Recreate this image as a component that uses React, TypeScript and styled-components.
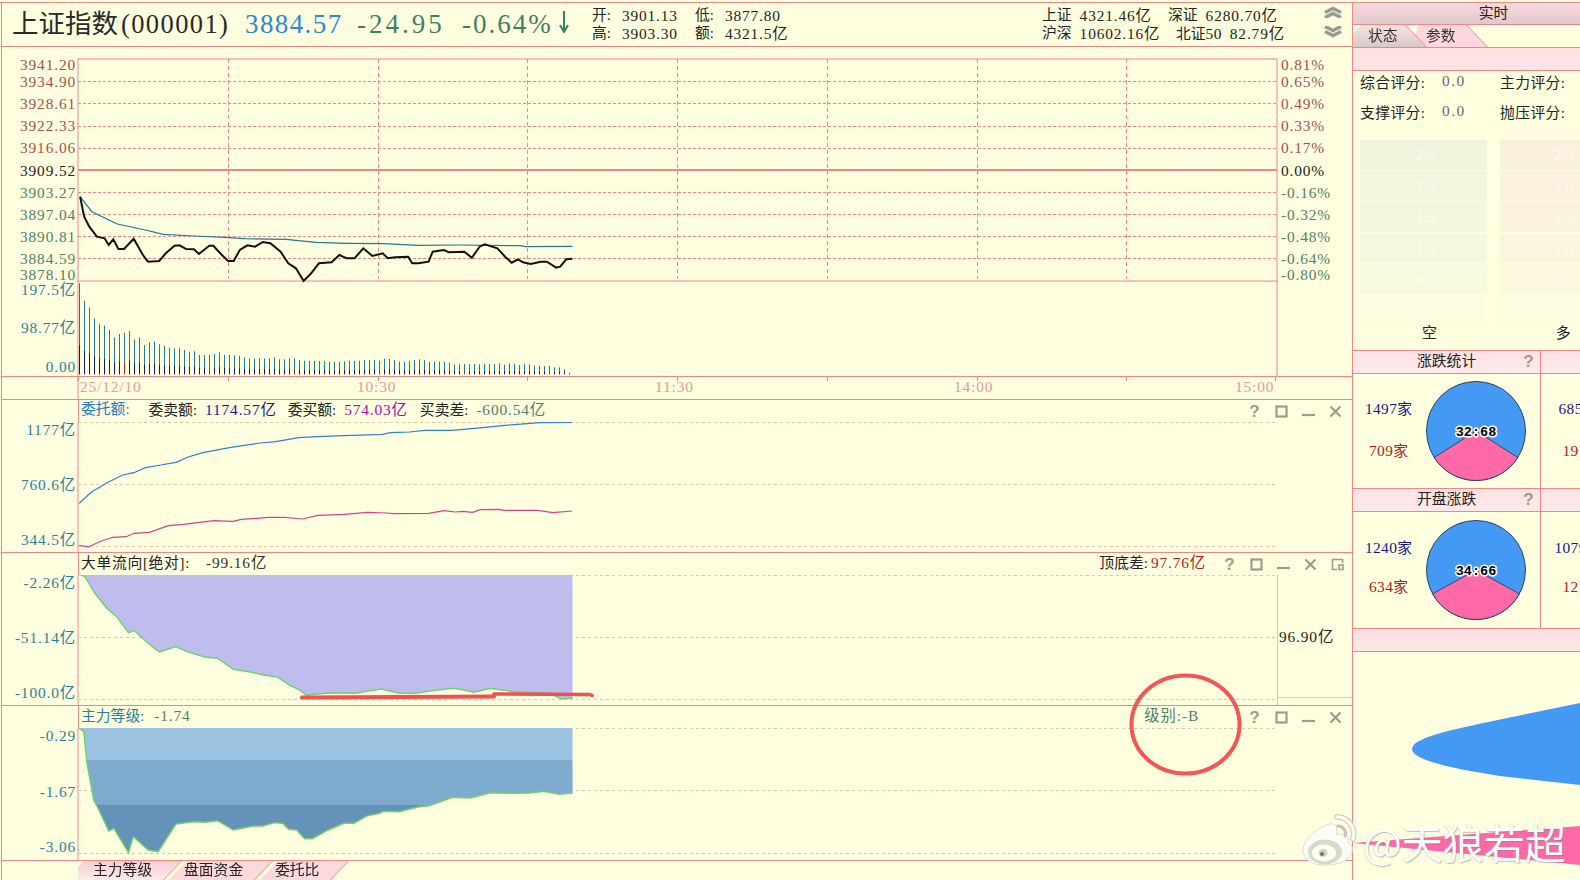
import React from 'react';
import styled, { createGlobalStyle } from 'styled-components';

const PINK = '#e88a8c';
const BG = '#ffffe0';
const TEAL = '#2b7f9c';
const BROWN = '#a34f4f';
const GREEN = '#4f8068';
const FONT = '"Liberation Serif","Noto Sans CJK SC",serif';

const Global = createGlobalStyle`
  html, body { margin: 0; padding: 0; background: ${BG}; }
  body { width: 1580px; height: 880px; overflow: hidden; font-family: ${FONT}; font-size: 14.8px; color: #222; }
  * { box-sizing: border-box; }
`;

const Screen = styled.div`
  position: relative; width: 1580px; height: 880px; overflow: hidden; background: ${BG};
  padding: 3px 0 0 1px; display: flex;
  &::before { content: ''; position: absolute; left: 0; right: 0; top: 2px; height: 1px; background: ${PINK}; }
`;
const LeftCol = styled.div`
  width: 1351px; flex: none; display: flex; flex-direction: column;
  border-left: 1px solid ${PINK};
`;
const RightCol = styled.div`
  width: 228px; flex: none; display: flex; flex-direction: column; border-left: 1px solid ${PINK}; overflow: hidden;
`;
const Num = styled.span<{ $tight?: boolean }>`
  font-size: 15.4px; letter-spacing: ${p => (p.$tight ? '.4px' : '.85px')};
`;

/* header */
const Header = styled.header`
  height: 44px; flex: none; display: flex; align-items: center; padding-left: 10px; border-bottom: 1px solid ${PINK};
`;
const Big = styled.div<{ $w: number; $c: string; $ls?: number }>`
  width: ${p => p.$w}px; flex: none; font-size: 27px; letter-spacing: ${p => p.$ls ?? 1.4}px; color: ${p => p.$c}; white-space: nowrap; line-height: 1;
`;
const Title = styled(Big)`
  letter-spacing: 0; font-size: 26.5px;
`;
const TitleCode = styled.span`
  margin-left: 3px; letter-spacing: 1.4px;
`;
const InfoGrid = styled.div<{ $w: number; $col: number }>`
  width: ${p => p.$w}px; flex: none; display: grid; grid-template-columns: ${p => p.$col}px 1fr; row-gap: 1px; line-height: 17px; white-space: nowrap;
  color: #222;
`;
const KV = styled.span<{ $g: number; $shift?: number }>`
  display: inline-flex; gap: ${p => p.$g}px; margin-left: ${p => p.$shift ?? 0}px;
`;
const Chevrons = styled.div`
  margin-left: 41px; margin-bottom: 5px; display: flex; flex-direction: column; gap: 8px; align-items: center;
`;

/* panes */
const MainPane = styled.section`
  height: 330px; flex: none; border-bottom: 1px solid ${PINK};
`;
const TimePane = styled.section`
  height: 23px; flex: none; border-bottom: 1px solid ${PINK};
`;
const Pane = styled.section<{ $h: number }>`
  height: ${p => p.$h}px; flex: none; display: flex; flex-direction: column; border-bottom: 1px solid ${PINK};
`;
const Legend = styled.div`
  height: 22px; flex: none; margin-left: 76px; padding: 0 0 3px 2px; border-left: 1px solid ${PINK};
  display: flex; align-items: center; white-space: nowrap; line-height: 1;
`;
const LegendItem = styled.span<{ $m?: number; $auto?: boolean; $ls?: number }>`
  margin-left: ${p => (p.$auto ? 'auto' : `${p.$m ?? 0}px`)};
  letter-spacing: ${p => p.$ls ?? 0}px;
`;
const LegendName = styled.span<{ $c: string; $ls?: number }>`
  color: ${p => p.$c};
  letter-spacing: ${p => p.$ls ?? 0}px;
`;
const Val = styled(Num)<{ $c: string; $g?: number }>`
  color: ${p => p.$c}; margin-left: ${p => p.$g ?? 8}px;
`;
const Tools = styled.div<{ $m?: number; $pr?: number }>`
  display: flex; align-items: center; gap: 14px; margin-left: ${p => (p.$m === undefined ? 'auto' : `${p.$m}px`)}; padding-right: ${p => p.$pr ?? 10}px; padding-top: 3px;
`;
const Tool = styled.svg`
  width: 13px; height: 13px; display: block; flex: none; fill: none; stroke: #9c9c8e; stroke-width: 2.2;
`;
const Help = styled.span`
  width: 13px; height: 13px; display: block; flex: none; font: bold 17px/13px "Liberation Sans", sans-serif; color: #9c9c8e; text-align: center;
`;
const ChartSvg = styled.svg`
  display: block; flex: none;
`;
const Axis = styled.text<{ $c: string; $end?: boolean }>`
  font-family: ${FONT}; font-size: 15.4px; letter-spacing: .85px; fill: ${p => p.$c}; text-anchor: ${p => (p.$end ? 'end' : 'start')};
`;

/* bottom tabs */
const BottomTabs = styled.nav`
  height: 19px; flex: none; margin-left: 76px; display: flex;
`;
const BottomTab = styled.div<{ $w: number; $first?: boolean }>`
  position: relative; width: ${p => p.$w}px; flex: none; margin-right: -12px; padding-left: 15px;
  line-height: 19px; filter: drop-shadow(1px 0 0 ${PINK}); white-space: nowrap; z-index: ${p => (p.$first ? 3 : 1)};
  &::before {
    content: ''; position: absolute; inset: 0; z-index: -1;
    background: ${p => (p.$first ? 'linear-gradient(#f5cfd2,#fdeaea)' : '#fcd9da')};
    clip-path: polygon(${p => (p.$first ? '6px 0' : '18px 0')}, 100% 0, calc(100% - 18px) 100%, 0 100%, ${p => (p.$first ? '0 6px' : '0 100%')});
  }
`;

/* right column */
const TopBar = styled.div`
  height: 22px; flex: none; padding-left: 54px; text-align: center; line-height: 20px; border-bottom: 1px solid ${PINK};
  background: linear-gradient(#f9d9dc, #dfc9cb);
`;
const SideTabs = styled.div`
  height: 22px; flex: none; display: flex;
`;
const SideTab = styled.div<{ $w: number; $first?: boolean }>`
  position: relative; width: ${p => p.$w}px; flex: none; margin-right: -13px; padding-left: ${p => (p.$first ? 15 : 13)}px; line-height: 23px;
  filter: drop-shadow(1px 0 0 ${PINK}); z-index: ${p => (p.$first ? 2 : 1)}; color: #333;
  &::before {
    content: ''; position: absolute; inset: 0; z-index: -1;
    background: ${p => (p.$first ? 'linear-gradient(#f8e2e2,#d8c8c8)' : '#fcd8dc')};
    clip-path: polygon(${p => (p.$first ? '0 8px, 8px 0' : '0 100%, 5px 0')}, calc(100% - 21px) 0, 100% 100%, 0 100%);
  }
`;
const Band = styled.div<{ $h: number }>`
  height: ${p => p.$h}px; flex: none; border-top: 1px solid ${PINK}; border-bottom: 1px solid ${PINK};
  background: linear-gradient(#fedfe2, #fde6e6);
`;
const Scores = styled.div`
  display: grid; grid-template-columns: 82px 58px auto; grid-auto-rows: 24px; row-gap: 6px; align-items: center;
  padding: 0 0 0 7px; margin-top: -2px; height: 71px; flex: none; white-space: nowrap;
`;
const ScoreLabel = styled.span`
  letter-spacing: .4px;
`;
const ScoreVal = styled.span`
  color: #667; letter-spacing: 1.5px; font-size: 15.4px;
`;
const Ladder = styled.div`
  display: grid; grid-template-columns: 127px 127px; column-gap: 13px; padding-left: 7px; width: 300px; flex: none;
  grid-auto-rows: 29.7px; row-gap: 1.5px; height: 182px;
`;
const Rung = styled.div<{ $bg: string }>`
  background: ${p => p.$bg}; color: rgba(255, 255, 255, .75); text-align: center; line-height: 29px; font-size: 15.4px;
`;
const Sides = styled.div`
  height: 28px; flex: none; display: flex; white-space: nowrap; line-height: 22px; padding-left: 69px; gap: 119px;
`;
const SectionHead = styled.div`
  height: 24px; flex: none; display: flex; border-top: 1px solid ${PINK}; border-bottom: 1px solid ${PINK};
  background: linear-gradient(#fde2e4, #fdeaea);
`;
const HeadCell = styled.div`
  width: 188px; flex: none; border-right: 1px solid ${PINK}; display: flex; align-items: center; line-height: 18px; padding: 0 0 2px 64px;
`;
const HeadHelp = styled(Help)`
  margin-left: auto; margin-right: 5px;
`;
const StatRow = styled.div<{ $h: number }>`
  height: ${p => p.$h}px; flex: none; display: flex;
`;
const StatCell = styled.div`
  width: 188px; flex: none; border-right: 1px solid ${PINK}; display: flex; align-items: center;
`;
const Counts = styled.div<{ $gap: number; $up: number }>`
  width: 71px; flex: none; display: flex; flex-direction: column; align-items: center; justify-content: center; gap: ${p => p.$gap}px;
  line-height: 17px; white-space: nowrap; margin-bottom: ${p => p.$up}px;
`;
const CountsSide = styled(Counts)`
  width: 74px;
`;
const Up = styled.span`
  color: #16168c;
`;
const Down = styled.span`
  color: #a82020;
`;
const PieText = styled.text`
  font: bold 13.5px "Liberation Mono", monospace; text-anchor: middle; fill: #000; stroke: #fff; stroke-width: 3px; paint-order: stroke; stroke-linejoin: round;
`;
const BigPie = styled.svg`
  display: block; flex: none;
`;

/* overlays */
const Circle = styled.svg`
  position: absolute; left: 1129px; top: 673px; width: 113px; height: 103px; fill: none; stroke: #f25656; stroke-width: 4;
`;
const Watermark = styled.div`
  position: absolute; left: 1301px; top: 812px; height: 58px; display: flex; align-items: center; gap: 6px;
  font: 400 41px/58px "Noto Sans CJK SC", "Noto Sans", sans-serif; color: #fdfdfa;
  text-shadow: 1px 1px 1px rgba(130, 130, 120, .5), -1px 0 1px rgba(170, 170, 160, .3);
  white-space: nowrap;
`;
const WeiboLogo = styled.svg`
  width: 56px; height: 56px; flex: none; display: block;
`;

/* data */
type P = [number, number][];
const map = (pts: P, sx: number, ox: number, oy: number) =>
  pts.map(([x, y]) => `${(ox + x / sx).toFixed(1)},${(oy + y / 3).toFixed(1)}`).join(' ');

const priceLine: P = [[157,590],[165,650],[175,680],[190,710],[205,715],[213,735],[222,718],[232,747],[243,747],[262,716],[280,765],[290,785],[312,783],[325,760],[342,737],[352,736],[365,747],[380,748],[390,762],[410,737],[418,737],[435,765],[447,783],[458,783],[470,750],[485,736],[500,740],[515,726],[530,730],[550,755],[565,790],[580,805],[595,843],[610,820],[625,790],[650,787],[665,765],[680,775],[695,775],[712,745],[730,768],[750,760],[760,775],[775,772],[800,770],[808,790],[820,790],[840,785],[848,755],[870,750],[880,757],[910,755],[925,773],[940,740],[950,733],[975,745],[990,770],[1003,788],[1015,778],[1025,787],[1040,792],[1060,785],[1072,785],[1090,803],[1098,800],[1110,778],[1122,776]];
const avgLine: P = [[157,590],[180,635],[230,672],[285,690],[320,703],[380,708],[440,712],[480,716],[560,718],[620,727],[680,730],[750,731],[820,736],[900,735],[1020,737],[1030,740],[1122,739]];
const volTops = [10,62,82,115,132,137,150,172,162,158,153,178,172,195,187,185,193,197,203,205,205,210,215,214,225,225,225,222,217,225,225,226,228,232,235,235,235,235,235,232,238,238,235,235,240,242,243,243,243,243,245,245,245,244,242,243,242,240,240,240,242,236,237,240,245,245,243,240,238,240,245,245,245,245,248,253,253,252,253,252,253,252,253,252,250,254,250,252,255,252,253,256,257,258,258,262,262,268,278];
const sellLine: P = [[207,670],[240,635],[280,608],[320,585],[350,578],[380,563],[420,555],[460,547],[490,532],[530,518],[600,503],[680,489],[720,485],[780,473],[830,470],[900,467],[1000,463],[1020,458],[1070,456],[1110,451],[1180,451],[1240,445],[1320,436],[1410,428],[1495,427]];
const buyLine: P = [[207,797],[232,800],[265,783],[295,772],[330,770],[350,760],[390,757],[440,737],[480,733],[520,727],[560,722],[610,724],[630,718],[670,715],[700,712],[745,712],[790,717],[830,706],[900,703],[960,697],[1010,699],[1030,701],[1120,700],[1160,692],[1190,696],[1210,694],[1235,697],[1255,689],[1305,688],[1315,691],[1405,691],[1445,698],[1495,693]];
const flowLine: P = [[205,75],[215,80],[240,130],[270,175],[295,200],[325,248],[340,242],[385,290],[403,306],[445,290],[470,303],[520,322],[550,325],[590,358],[630,365],[670,376],[700,380],[735,408],[755,418],[775,436],[800,432],[850,428],[900,430],[930,423],[965,417],[1010,430],[1050,430],[1100,421],[1150,415],[1200,427],[1240,415],[1300,425],[1390,430],[1420,447],[1448,444]];
const levelLine: P = [[200,535],[212,545],[220,640],[237,750],[250,780],[275,843],[288,835],[325,908],[337,860],[375,900],[400,905],[445,822],[490,815],[520,817],[550,812],[590,840],[640,828],[665,828],[695,818],[715,820],[730,838],[750,840],[770,866],[790,866],[830,840],[870,820],[895,820],[930,797],[960,790],[970,784],[1010,785],[1060,770],[1085,767],[1145,742],[1190,744],[1240,728],[1290,730],[1340,729],[1375,724],[1415,733],[1448,729]];

const hGrid = [81, 103, 126, 148, 192, 214, 236, 258];
const vGrid = [228, 378, 527, 677, 827, 977, 1126];
const leftLabels: [string, number, string][] = [
  ['3941.20', 65, BROWN], ['3934.90', 82, BROWN], ['3928.61', 104, BROWN], ['3922.33', 126, BROWN], ['3916.06', 148, BROWN],
  ['3909.52', 171, '#222'], ['3903.27', 193, GREEN], ['3897.04', 215, GREEN], ['3890.81', 237, GREEN], ['3884.59', 259, GREEN], ['3878.10', 275, GREEN],
];
const rightLabels: [string, number, string][] = [
  ['0.81%', 65, BROWN], ['0.65%', 82, BROWN], ['0.49%', 104, BROWN], ['0.33%', 126, BROWN], ['0.17%', 148, BROWN],
  ['0.00%', 171, '#222'], ['-0.16%', 193, GREEN], ['-0.32%', 215, GREEN], ['-0.48%', 237, GREEN], ['-0.64%', 259, GREEN], ['-0.80%', 275, GREEN],
];

const MainChart = () => (
  <ChartSvg width={1350} height={329} viewBox="2 47 1350 329">
    <rect x="78" y="59" width="1199" height="222" fill="none" stroke={PINK} />
    <line x1="78" y1="281" x2="78" y2="377" stroke={PINK} />
    <line x1="1277" y1="281" x2="1277" y2="377" stroke={PINK} />
    {hGrid.map(y => <line key={y} x1="78" x2="1277" y1={y + .5} y2={y + .5} stroke={PINK} strokeDasharray="3 2" />)}
    {vGrid.map(x => <line key={x} x1={x + .5} x2={x + .5} y1="59" y2="279" stroke={PINK} strokeDasharray="4 3" />)}
    <line x1="78" x2="1277" y1="170" y2="170" stroke={PINK} strokeWidth="2" />
    {leftLabels.map(([t, y, c]) => <Axis key={t} x="76" y={y + 5} $c={c} $end>{t}</Axis>)}
    {rightLabels.map(([t, y, c]) => <Axis key={t} x="1281" y={y + 5} $c={c}>{t}</Axis>)}
    <Axis x="76" y="295" $c={TEAL} $end>197.5亿</Axis>
    <Axis x="76" y="333" $c={TEAL} $end>98.77亿</Axis>
    <Axis x="76" y="372" $c={TEAL} $end>0.00</Axis>
    {volTops.map((t, i) => {
      const x = 79.5 + i * 5;
      const top = 280 + t / 3;
      const low = 374.3 - (374.3 - top) * 0.32;
      return (
        <g key={i}>
          <line x1={x} x2={x} y1={top} y2={374.3} stroke="#1f7d9e" />
          <line x1={x} x2={x} y1={low} y2={374.3} stroke={i % 17 === 9 ? '#a03030' : '#15157e'} />
        </g>
      );
    })}
    <polyline points={map(avgLine, 1.96, 0, 0)} fill="none" stroke="#1f7a96" strokeWidth="1.2" />
    <polyline points={map(priceLine, 1.96, 0, 0)} fill="none" stroke="#111" strokeWidth="2" />
  </ChartSvg>
);

const TimeAxis = () => (
  <ChartSvg width={1350} height={22} viewBox="2 377 1350 22">
    <line x1="78" x2="78" y1="377" y2="399" stroke={PINK} />
    {[78, 228, 378, 527, 677, 827, 977, 1126, 1275].map(x => <line key={x} x1={x + .5} x2={x + .5} y1="377" y2="381" stroke={PINK} />)}
    <Axis x="80" y="392" $c="#e29a9a">25/12/10</Axis>
    <Axis x="357" y="392" $c="#e29a9a">10:30</Axis>
    <Axis x="655" y="392" $c="#e29a9a">11:30</Axis>
    <Axis x="954" y="392" $c="#e29a9a">14:00</Axis>
    <Axis x="1235" y="392" $c="#e29a9a">15:00</Axis>
  </ChartSvg>
);

const GridLines = ({ ys, to = 1277 }: { ys: number[]; to?: number }) => (
  <>
    {ys.map(y => <line key={y} x1="78" x2={to} y1={y + .5} y2={y + .5} stroke="#dcc9a4" strokeDasharray="3 3" />)}
  </>
);

const OrderChart = () => (
  <ChartSvg width={1350} height={130} viewBox="2 422 1350 130">
    <line x1="78" x2="78" y1="422" y2="552" stroke={PINK} />
    <GridLines ys={[422, 484, 546]} />
    <Axis x="76" y="435" $c={TEAL} $end>1177亿</Axis>
    <Axis x="76" y="490" $c={TEAL} $end>760.6亿</Axis>
    <Axis x="76" y="545" $c={TEAL} $end>344.5亿</Axis>
    <polyline points={map(sellLine, 2.613, 0, 280)} fill="none" stroke="#2f80cf" strokeWidth="1.2" />
    <polyline points={map(buyLine, 2.613, 0, 280)} fill="none" stroke="#d0438f" strokeWidth="1.2" />
  </ChartSvg>
);

const flowStr = map(flowLine, 2.529, 0, 550);
const FlowChart = () => (
  <ChartSvg width={1350} height={130} viewBox="2 575 1350 130">
    <line x1="78" x2="78" y1="575" y2="705" stroke={PINK} />
    <GridLines ys={[575, 637, 699]} />
    <line x1="1277.5" x2="1277.5" y1="575" y2="705" stroke="#dcc9a4" />
    <line x1="1277" x2="1352" y1="697.5" y2="697.5" stroke="#dcc9a4" />
    <Axis x="76" y="588" $c={TEAL} $end>-2.26亿</Axis>
    <Axis x="76" y="643" $c={TEAL} $end>-51.14亿</Axis>
    <Axis x="76" y="698" $c={TEAL} $end>-100.0亿</Axis>
    <Axis x="1279" y="642" $c="#222">96.90亿</Axis>
    <polygon points={`${flowStr} 572.5,575 81,575`} fill="#bfbdee" />
    <polyline points={flowStr} fill="none" stroke="#6ed06e" strokeWidth="1.4" />
    <polyline points="302,697.5 494,696.5" fill="none" stroke="#f25050" strokeWidth="4" strokeLinecap="round" />
    <polyline points="494,694 590,694.5 592,695.5" fill="none" stroke="#f25050" strokeWidth="3.5" strokeLinecap="round" />
  </ChartSvg>
);

const levelStr = map(levelLine, 2.529, 0, 550);
const LevelChart = () => (
  <ChartSvg width={1350} height={132} viewBox="2 728 1350 132">
    <defs>
      <clipPath id="levelClip"><polygon points={`${levelStr} 572.5,728 79,728`} /></clipPath>
    </defs>
    <line x1="78" x2="78" y1="728" y2="860" stroke={PINK} />
    <GridLines ys={[728, 790, 853]} />
    <Axis x="76" y="741" $c={TEAL} $end>-0.29</Axis>
    <Axis x="76" y="797" $c={TEAL} $end>-1.67</Axis>
    <Axis x="76" y="852" $c={TEAL} $end>-3.06</Axis>
    <g clipPath="url(#levelClip)">
      <rect x="78" y="728" width="496" height="32" fill="#9cc3e1" />
      <rect x="78" y="760" width="496" height="45" fill="#7eaacd" />
      <rect x="78" y="805" width="496" height="56" fill="#6592b8" />
    </g>
    <polyline points={levelStr} fill="none" stroke="#6ed06e" strokeWidth="1.4" />
  </ChartSvg>
);

const ToolIcons = ({ restore, m, pr }: { restore?: boolean; m?: number; pr?: number }) => (
  <Tools $m={m} $pr={pr}>
    <Help>?</Help>
    <Tool viewBox="0 0 13 13"><rect x="1.5" y="1.5" width="10" height="10" /></Tool>
    <Tool viewBox="0 0 13 13"><line x1="0" x2="13" y1="10" y2="10" /></Tool>
    <Tool viewBox="0 0 13 13"><path d="M1.5 1.5l10 10M11.5 1.5l-10 10" /></Tool>
    {restore && <Tool viewBox="0 0 13 13"><path d="M11.5 5V1.5h-10v10H6M8 7h4v4.5H8z" strokeWidth="1.6" /></Tool>}
  </Tools>
);

const Pie = ({ left, text }: { left: number; text: string }) => {
  const r = 49.5;
  const a = (left / 100) * Math.PI;
  const dx = Math.sin(a) * r;
  const dy = Math.cos(a) * r;
  return (
    <ChartSvg width={104} height={104} viewBox="-52 -52 104 104">
      <circle r={r} fill="#4499f5" stroke="#2f4660" strokeWidth="1" />
      <path d={`M0 0L${dx} ${dy}A${r} ${r} 0 0 1 ${-dx} ${dy}Z`} fill="#ff69a8" stroke="#2f4660" strokeWidth="1" />
      <PieText y="4.5">{text}</PieText>
    </ChartSvg>
  );
};

const rungs: [string, string, string, string][] = [
  ['-2.5', '#eff4dc', '2.5', '#faf0dc'],
  ['-2.0', '#f1f6dd', '2.0', '#fbf1dc'],
  ['-1.5', '#f3f7dd', '1.5', '#fbf3dc'],
  ['-1.0', '#f5f8de', '1.0', '#fcf5dd'],
  ['-0.5', '#f8fade', '0.5', '#fdf8de'],
  ['0', '#fcfdde', '0', '#fefcdf'],
];

const App = () => (
  <Screen>
    <Global />
    <LeftCol>
      <Header>
        <Title $w={233} $c="#2a2a2a">上证指数<TitleCode>(000001)</TitleCode></Title>
        <Big $w={112} $c="#2f86d6">3884.57</Big>
        <Big $w={105} $c="#3f7f5f" $ls={3}>-24.95</Big>
        <Big $w={97} $c="#3f7f5f" $ls={2}>-0.64%</Big>
        <Big $w={33} $c="#3f7f5f">
          <svg width="10" height="22" viewBox="0 0 10 22" fill="none" stroke="#3f7f5f" strokeWidth="2"><path d="M5 0v20M1 14l4 7 4-7" /></svg>
        </Big>
        <InfoGrid $w={450} $col={103}>
          <KV $g={11}>开:<Num>3901.13</Num></KV><KV $g={11}>低:<Num>3877.80</Num></KV>
          <KV $g={11}>高:<Num>3903.30</Num></KV><KV $g={11}>额:<Num>4321.5亿</Num></KV>
        </InfoGrid>
        <InfoGrid $w={241} $col={126}>
          <KV $g={8}>上证<Num>4321.46亿</Num></KV><KV $g={8}>深证<Num>6280.70亿</Num></KV>
          <KV $g={8}>沪深<Num>10602.16亿</Num></KV><KV $g={8} $shift={8}><span>北证<Num $tight>50</Num></span><Num>82.79亿</Num></KV>
        </InfoGrid>
        <Chevrons>
          <svg width="18" height="12" viewBox="0 0 18 12" fill="none" stroke="#9a9a90" strokeWidth="3.6"><path d="M1 6.5l8-4 8 4M1 11.5l8-4 8 4" /></svg>
          <svg width="18" height="12" viewBox="0 0 18 12" fill="none" stroke="#9a9a90" strokeWidth="3.6"><path d="M1 .5l8 4 8-4M1 5.5l8 4 8-4" /></svg>
        </Chevrons>
      </Header>
      <MainPane><MainChart /></MainPane>
      <TimePane><TimeAxis /></TimePane>
      <Pane $h={153}>
        <Legend>
          <LegendItem><LegendName $c="#1f78c8">委托额:</LegendName></LegendItem>
          <LegendItem $m={19}>委卖额:<Val $c="#16168c">1174.57亿</Val></LegendItem>
          <LegendItem $m={11}>委买额:<Val $c="#a010a0">574.03亿</Val></LegendItem>
          <LegendItem $m={12}>买卖差:<Val $c={GREEN}>-600.54亿</Val></LegendItem>
          <ToolIcons />
        </Legend>
        <OrderChart />
      </Pane>
      <Pane $h={153}>
        <Legend>
          <LegendItem><LegendName $c="#222" $ls={.7}>大单流向[绝对]:</LegendName><Val $c="#333" $g={16}>-99.16亿</Val></LegendItem>
          <LegendItem $auto>顶底差:<Val $c="#b02020" $g={3}>97.76亿</Val></LegendItem>
          <ToolIcons restore m={17} pr={8} />
        </Legend>
        <FlowChart />
      </Pane>
      <Pane $h={155}>
        <Legend>
          <LegendItem><LegendName $c={TEAL}>主力等级:</LegendName><Val $c={GREEN} $g={10}>-1.74</Val></LegendItem>
          <LegendItem $auto><Val $c={GREEN} $g={0}>级别:-B</Val></LegendItem>
          <ToolIcons m={49} />
        </Legend>
        <LevelChart />
      </Pane>
      <BottomTabs>
        <BottomTab $w={103} $first>主力等级</BottomTab>
        <BottomTab $w={103}>盘面资金</BottomTab>
        <BottomTab $w={88}>委托比</BottomTab>
      </BottomTabs>
    </LeftCol>
    <RightCol>
      <TopBar>实时</TopBar>
      <SideTabs>
        <SideTab $w={73} $first>状态</SideTab>
        <SideTab $w={74}>参数</SideTab>
      </SideTabs>
      <Band $h={24} />
      <Scores>
        <ScoreLabel>综合评分:</ScoreLabel><ScoreVal>0.0</ScoreVal><ScoreLabel>主力评分:</ScoreLabel>
        <ScoreLabel>支撑评分:</ScoreLabel><ScoreVal>0.0</ScoreVal><ScoreLabel>抛压评分:</ScoreLabel>
      </Scores>
      <Ladder>
        {rungs.map(([a, ac, b, bc]) => (
          <React.Fragment key={a + b}>
            <Rung $bg={ac}>{a}</Rung>
            <Rung $bg={bc}>{b}</Rung>
          </React.Fragment>
        ))}
      </Ladder>
      <Sides><span>空</span><span>多</span></Sides>
      <SectionHead>
        <HeadCell>涨跌统计<HeadHelp>?</HeadHelp></HeadCell>
      </SectionHead>
      <StatRow $h={114}>
        <StatCell>
          <Counts $gap={24} $up={2}><Up><Num $tight>1497</Num>家</Up><Down><Num $tight>709</Num>家</Down></Counts>
          <Pie left={32} text="32:68" />
        </StatCell>
        <CountsSide $gap={24} $up={2}><Up><Num $tight>685</Num>家</Up><Down><Num $tight>19</Num>家</Down></CountsSide>
      </StatRow>
      <SectionHead>
        <HeadCell>开盘涨跌<HeadHelp>?</HeadHelp></HeadCell>
      </SectionHead>
      <StatRow $h={116}>
        <StatCell>
          <Counts $gap={21} $up={6}><Up><Num $tight>1240</Num>家</Up><Down><Num $tight>634</Num>家</Down></Counts>
          <Pie left={34} text="34:66" />
        </StatCell>
        <CountsSide $gap={21} $up={6}><Up><Num $tight>1079</Num>家</Up><Down><Num $tight>12</Num>家</Down></CountsSide>
      </StatRow>
      <Band $h={24} />
      <BigPie width={227} height={230} viewBox="1353 649 227 230">
        <path d="M1580 700L1500 716.5C1450 727 1412 735 1412 746C1412 757 1450 765 1500 773L1580 782Z" fill="#4499f5" />
        <path d="M1580 823L1353 840L1580 862Z" fill="#ff69a8" />
      </BigPie>
    </RightCol>
    <Circle viewBox="0 0 113 103"><ellipse cx="56.5" cy="51.5" rx="54" ry="49" /></Circle>
    <Watermark>
      <WeiboLogo viewBox="0 0 56 56">
        <path d="M2 38C2 25 18 14 29 11C37 9 36 17 35 22C43 19 50 22 47 29C54 33 52 42 45 47C34 54 4 56 2 38Z" fill="#fcfcf6" stroke="#dcdccd" />
        <ellipse cx="24" cy="39" rx="17" ry="12.5" fill="#d9d9c8" />
        <ellipse cx="23" cy="40" rx="12" ry="8.5" fill="#fdfdf5" />
        <ellipse cx="22" cy="40" rx="4.5" ry="4" fill="#d2d2c2" />
        <circle cx="21" cy="41" r="2" fill="#77776c" />
        <path d="M36 4C47 4 55 14 52 26" fill="none" stroke="#c4c4b6" strokeWidth="5.5" strokeLinecap="round" />
        <path d="M36 4C47 4 55 14 52 26" fill="none" stroke="#fdfdf5" strokeWidth="3.6" strokeLinecap="round" />
        <path d="M37 13C42 13 46 18 44 23" fill="none" stroke="#c4c4b6" strokeWidth="3" strokeLinecap="round" />
      </WeiboLogo>
      <span>@天狼若超</span>
    </Watermark>
  </Screen>
);

export default App;
